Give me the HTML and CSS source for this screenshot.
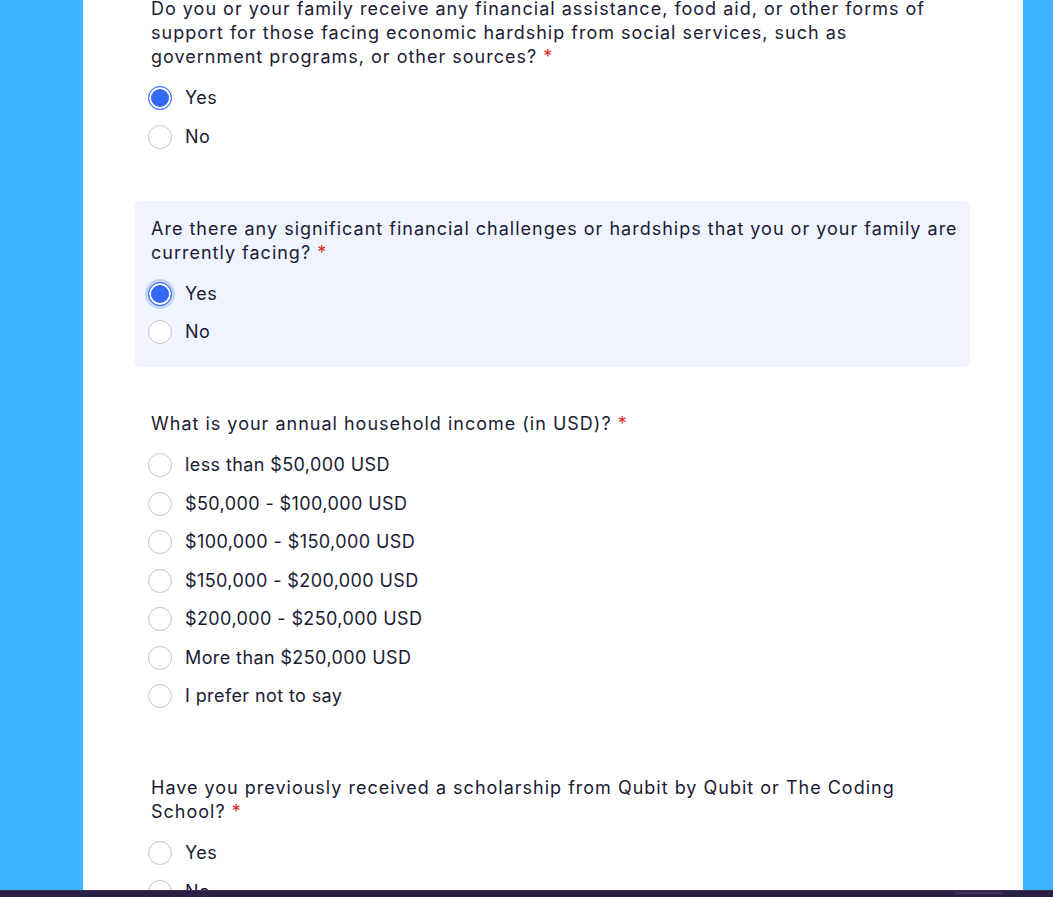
FILE: index.html
```html
<!DOCTYPE html>
<html>
<head>
<meta charset="utf-8">
<link rel="stylesheet" href="styles.css">
</head>
<body>
<div class="page">
  <main class="panel">
    <div class="questions">
      <section class="question">
        <p class="q-text">Do you or your family receive any financial assistance, food aid, or other forms of support for those facing economic hardship from social services, such as government programs, or other sources? <span class="req">*</span></p>
        <div class="options">
          <label class="option"><span class="radio checked"></span><span class="label">Yes</span></label>
          <label class="option"><span class="radio"></span><span class="label">No</span></label>
        </div>
      </section>
      <section class="question active">
        <p class="q-text">Are there any significant financial challenges or hardships that you or your family are currently facing? <span class="req">*</span></p>
        <div class="options">
          <label class="option"><span class="radio checked focused"></span><span class="label">Yes</span></label>
          <label class="option"><span class="radio"></span><span class="label">No</span></label>
        </div>
      </section>
      <section class="question">
        <p class="q-text">What is your annual household income (in USD)? <span class="req">*</span></p>
        <div class="options">
          <label class="option"><span class="radio"></span><span class="label">less than $50,000 USD</span></label>
          <label class="option"><span class="radio"></span><span class="label">$50,000 - $100,000 USD</span></label>
          <label class="option"><span class="radio"></span><span class="label">$100,000 - $150,000 USD</span></label>
          <label class="option"><span class="radio"></span><span class="label">$150,000 - $200,000 USD</span></label>
          <label class="option"><span class="radio"></span><span class="label">$200,000 - $250,000 USD</span></label>
          <label class="option"><span class="radio"></span><span class="label">More than $250,000 USD</span></label>
          <label class="option"><span class="radio"></span><span class="label">I prefer not to say</span></label>
        </div>
      </section>
      <section class="question">
        <p class="q-text">Have you previously received a scholarship from Qubit by Qubit or The Coding School? <span class="req">*</span></p>
        <div class="options">
          <label class="option"><span class="radio"></span><span class="label">Yes</span></label>
          <label class="option"><span class="radio"></span><span class="label">No</span></label>
        </div>
      </section>
    </div>
  </main>
</div>
<div class="taskbar"><div class="thumb"></div></div>
</body>
</html>
```
FILE: styles.css
```css
html, body {
  margin: 0;
  padding: 0;
  height: 100%;
  overflow: hidden;
}
body {
  background: #3bb5fd;
  font-family: Inter, "Noto Sans", "Liberation Sans", sans-serif;
  color: #1b1b35;
}
.page {
  display: flex;
  justify-content: flex-start;
  padding-left: 83px;
  height: 100%;
}
.panel {
  width: 940px;
  background: #ffffff;
  height: 100%;
}
.questions {
  display: flex;
  flex-direction: column;
  gap: 29.5px;
  margin-top: -19px;
  padding: 0 53px 0 52px;
}
.question {
  padding: 16px 10px 15px 16px;
  border-radius: 5px;
}
.question.active {
  background: #eff4fe;
}
.q-text {
  margin: 0;
  font-size: 18px;
  line-height: 24px;
  letter-spacing: 1px;
}
.req {
  color: #e0261b;
}
.options {
  display: flex;
  flex-direction: column;
  margin-top: 10px;
}
.option {
  display: flex;
  align-items: center;
  height: 38.5px;
  gap: 13px;
  font-size: 18px;
  letter-spacing: 0.4px;
}
.radio {
  width: 24px;
  height: 24px;
  box-sizing: border-box;
  border: 1px solid #c3c6cf;
  border-radius: 50%;
  background: #fff;
  flex: none;
  margin-left: -3px;
}
.radio.checked {
  border: 1.5px solid #3268f5;
  background: #3268f5;
  box-shadow: inset 0 0 0 2px #ffffff;
}
.radio.focused {
  box-shadow: inset 0 0 0 2px #ffffff, 0 0 0 3px #c3d4fb;
}
.label {
  line-height: 24px;
}
.taskbar {
  position: fixed;
  left: 0;
  right: 0;
  bottom: 0;
  height: 6px;
  background: #2a1f45;
  border-top: 1px solid #3a3055;
}
.thumb {
  position: absolute;
  left: 955px;
  width: 48px;
  top: 1px;
  height: 2px;
  background: #3d335c;
}
```
